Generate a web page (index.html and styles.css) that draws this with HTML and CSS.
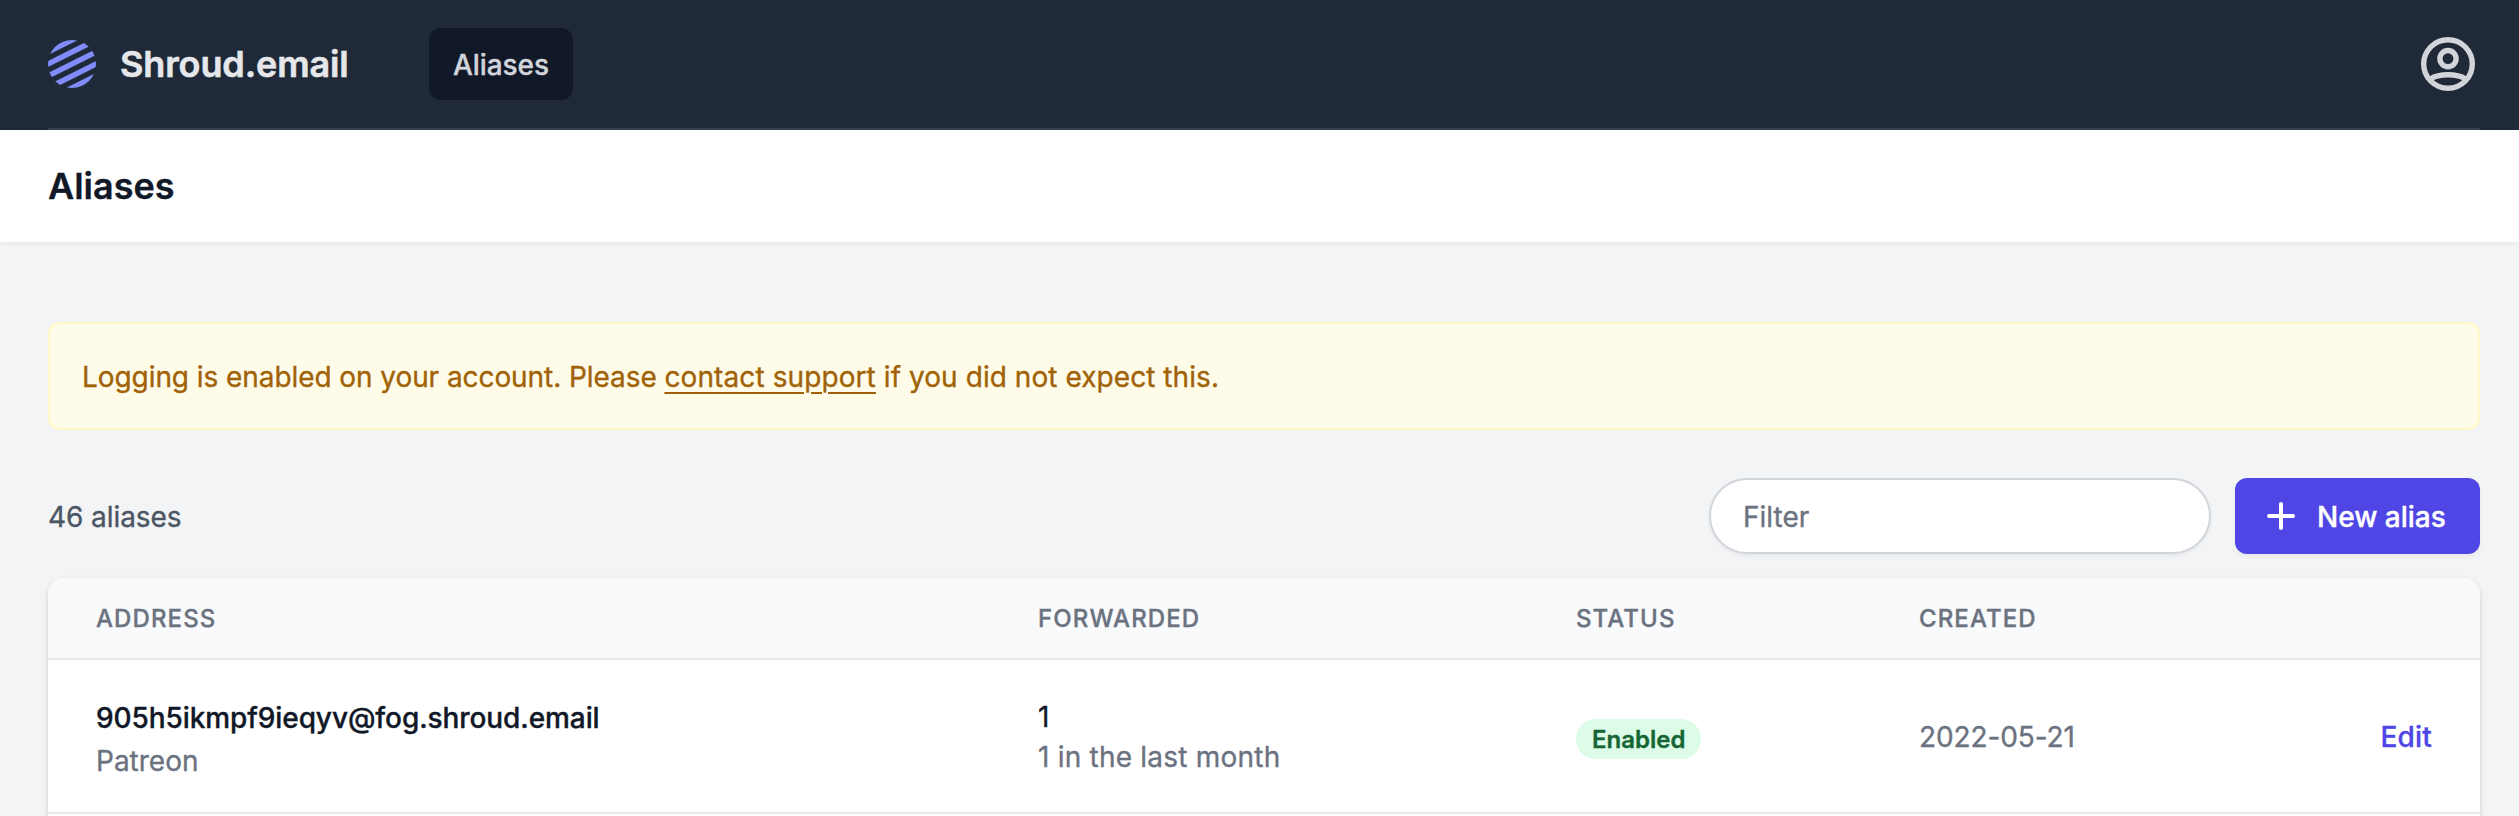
FILE: index.html
```html
<!DOCTYPE html>
<html lang="en">
<head>
<meta charset="utf-8">
<title>Aliases - Shroud.email</title>
<link rel="stylesheet" href="styles.css">
</head>
<body>
<nav class="nav">
  <div class="nav-inner">
    <svg class="logo" viewBox="0 0 48 48" aria-hidden="true">
      <defs><clipPath id="disc"><circle cx="24" cy="24" r="24"/></clipPath></defs>
      <g clip-path="url(#disc)" stroke="#818cf8" stroke-width="5.5">
        <path d="M-6 15L54 -15M-6 27L54 -3M-6 39L54 9M-6 51L54 21M-6 63L54 33"/>
      </g>
    </svg>
    <span class="brand">Shroud.email</span>
    <a class="nav-link">Aliases</a>
    <svg class="user" viewBox="0 0 54 54" fill="none" stroke="#d1d5db" stroke-width="5.4" aria-hidden="true">
      <circle cx="27" cy="27" r="24.3"/><circle cx="27" cy="21.6" r="8.1"/>
      <path d="M9.5 42C14 39 20 37.8 27 37.8S40 39 44.5 42"/>
    </svg>
  </div>
</nav>
<header class="header"><h1>Aliases</h1></header>
<main class="main">
  <div class="alert"><span class="lead">Logging is enabled on your account. Please </span><a>contact support</a> if you did not expect this.</div>
  <div class="toolbar">
    <p class="count">46 aliases</p>
    <input class="filter" type="text" placeholder="Filter">
    <button class="new">
      <svg class="plus" viewBox="0 0 28 28" aria-hidden="true"><path d="M14 2V26M2 14H26" stroke="#fff" stroke-width="4" stroke-linecap="round"/></svg>
      <span>New alias</span>
    </button>
  </div>
  <div class="card">
    <div class="row head"><span>Address</span><span>Forwarded</span><span>Status</span><span>Created</span><span></span></div>
    <div class="row item">
      <div class="address"><p class="email">905h5ikmpf9ieqyv@fog.shroud.email</p><p>Patreon</p></div>
      <div class="forwarded"><p class="total">1</p><p class="recent">1 in the last month</p></div>
      <div class="status"><span class="badge">Enabled</span></div>
      <div class="created">2022-05-21</div>
      <a class="edit">Edit</a>
    </div>
  </div>
</main>
</body>
</html>
```
FILE: styles.css
```css
* { box-sizing: border-box; margin: 0; }
body { height: 816px; overflow: hidden; background: #f3f4f6; font-family: Inter, "Liberation Sans", sans-serif; font-size: 28px; line-height: 40px; color: #6b7280; -webkit-text-stroke: .35px currentColor; }
.nav { height: 130px; padding: 0 39px 0 48px; background: #1f2937; }
.nav-inner { height: 130px; display: flex; align-items: center; border-bottom: 2px solid #374151; }
.logo { width: 48px; height: 48px; }
.brand { width: 229px; margin-left: 24px; font-size: 36px; font-weight: 600; letter-spacing: -.12px; color: #e5e7eb; -webkit-text-stroke-width: .6px; }
.nav-link { width: 144px; margin-left: 80px; height: 72px; padding: 17px 0 15px; text-align: center; border-radius: 12px; background: #111827; color: #d1d5db; font-weight: 500; letter-spacing: -.1px; }
.user { width: 54px; height: 54px; margin-left: auto; margin-right: 5px; }
.header { height: 112px; padding: 28px 48px; background: #fff; box-shadow: 0 2px 4px rgba(0,0,0,.05); }
.header h1 { font-size: 36px; line-height: 56px; font-weight: 600; color: #111827; }
.main { padding: 80px 39px 0 48px; }
.alert { height: 108px; padding: 33px 32px 31px; border: 2px solid #fef9c3; border-radius: 12px; background: #fefce8; color: #a16207; line-height: 40px; letter-spacing: .06px; }
.alert .lead { letter-spacing: -.07px; }
.alert a { letter-spacing: .1px; text-decoration: underline; text-decoration-thickness: 2px; text-underline-offset: 5px; }
.toolbar { display: flex; align-items: center; margin-top: 48px; height: 76px; }
.count { padding-top: 2px; margin-right: auto; color: #4b5563; letter-spacing: -.08px; }
.filter { width: 502px; height: 76px; padding: 2px 32px 0; border: 2px solid #d1d5db; border-radius: 38px; background: #fff; box-shadow: 0 2px 4px rgba(0,0,0,.05); font: inherit; }
.filter::placeholder { color: #6b7280; opacity: 1; }
.new { display: flex; align-items: center; width: 245px; height: 76px; margin-left: 24px; padding: 0 0 0 32px; border: 0; border-radius: 12px; background: #4f46e5; color: #fff; font: inherit; font-weight: 500; box-shadow: 0 2px 4px rgba(0,0,0,.05); white-space: nowrap; }
.new span { padding-top: 2px; }
.plus { width: 28px; height: 28px; margin-right: 22px; }
.card { margin-top: 24px; height: 238px; overflow: hidden; border-radius: 16px 16px 0 0; background: #fff; box-shadow: 0 2px 6px rgba(0,0,0,.1), 0 2px 4px rgba(0,0,0,.06); }
.row { display: grid; grid-template-columns: 942px 538px 343px 1fr auto; align-items: center; padding: 0 48px; border-bottom: 2px solid #e5e7eb; }
.head { height: 82px; padding-top: 2px; background: #f9fafb; font-size: 24px; line-height: 32px; font-weight: 500; letter-spacing: 1.1px; text-transform: uppercase; }
.item { height: 154px; padding-top: 2px; }
.address { padding-top: 5px; }
.address p + p { margin-top: 3px; }
.email { color: #111827; font-weight: 500; letter-spacing: -.09px; }
.total { color: #111827; }
.recent { letter-spacing: .22px; }
.status { padding-top: 2px; }
.badge { display: inline-block; height: 40px; padding: 0 16px; border-radius: 20px; background: #dcfce7; color: #166534; font-size: 24px; line-height: 41px; font-weight: 600; vertical-align: middle; }
.created { letter-spacing: -.1px; }
.edit { color: #4f46e5; font-weight: 500; letter-spacing: .2px; }
```
